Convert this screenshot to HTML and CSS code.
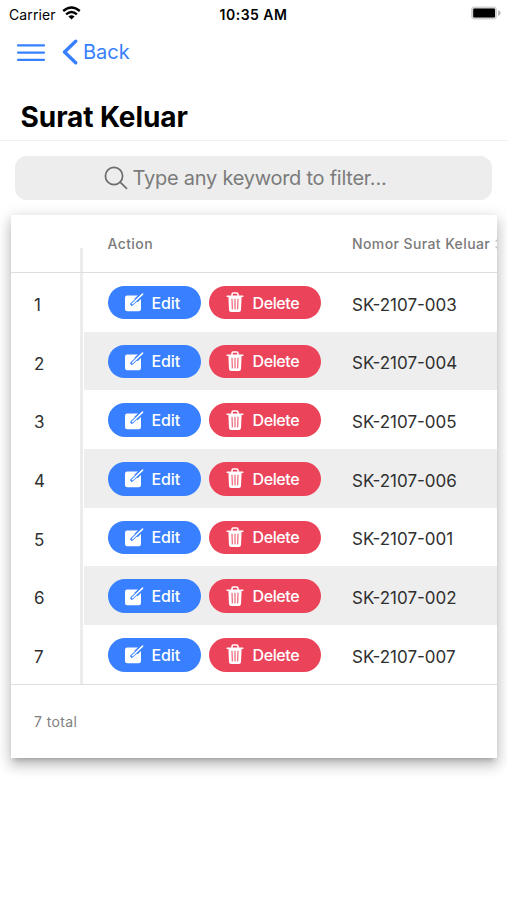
FILE: index.html
```html
<!DOCTYPE html>
<html lang="id">
<head>
<meta charset="utf-8">
<title>Surat Keluar</title>
<link rel="stylesheet" href="styles.css">
</head>
<body>
<svg width="0" height="0" class="defs">
  <symbol id="edit" viewBox="0 0 20 19">
    <rect x="1" y="2.6" width="16" height="15.6" rx="2.2" fill="#fff"/>
    <path d="M12 7.5 18.5 1.2" stroke="#3880ff" stroke-width="4.6"/>
    <path d="M7.9 11.2 18.6 1.2" stroke="#3880ff" stroke-width="3.2" stroke-linecap="round"/>
    <path d="M8.4 10.7 18.6 1.1" stroke="#fff" stroke-width="1.5" stroke-linecap="round"/>
  </symbol>
  <symbol id="trash" viewBox="0 0 18 21" fill="none" stroke="#fff">
    <path d="M1.2 4.2H16.8" stroke-width="1.6" stroke-linecap="round"/>
    <path d="M6 4V2.3Q6 1 7.3 1H10.7Q12 1 12 2.3V4" stroke-width="1.5"/>
    <path d="M2.4 4.5H15.6L15 17.9Q14.8 20 12.9 20H5.1Q3.2 20 3 17.9Z" fill="#fff" stroke="none"/>
    <path d="M6 7.2 6.3 17M9 7.2V17M12 7.2 11.7 17" stroke="#eb445a" stroke-width="1" stroke-linecap="round"/>
  </symbol>
</svg>
<div class="status">
  <div class="left"><span class="carrier">Carrier</span>
  <svg class="wifi" width="19" height="14" viewBox="0 0 19 14" fill="none" stroke="#000" stroke-width="2.4"><path d="M1.2 5Q9.5-2 17.8 5"/><path d="M4.1 8.3Q9.5 3.7 14.9 8.3"/><path d="M9.5 13.4 6.4 10.5Q9.5 8.1 12.6 10.5Z" fill="#000" stroke="none"/></svg></div>
  <span class="clock">10:35 AM</span>
  <svg class="battery" width="32" height="16" viewBox="0 0 32 16"><rect x="1" y="1.4" width="26" height="13.2" rx="3.6" fill="#d2d2d2"/><rect x="3.2" y="3.5" width="21.8" height="9" rx="1.2" fill="#000"/><path d="M28 5Q30.8 6 30.8 8T28 11Z" fill="#bbb"/></svg>
</div>
<header class="toolbar">
  <svg width="30" height="20" viewBox="0 0 30 20" stroke="#3880ff" stroke-width="2.3" stroke-linecap="round"><path d="M2 3.4H28M2 10.6H28M2 17.8H28"/></svg>
  <svg class="chevron" width="16" height="26" viewBox="0 0 16 26" fill="none" stroke="#3880ff" stroke-width="3.4" stroke-linecap="round" stroke-linejoin="round"><path d="M13.7 2.2 2.5 13 13.7 23.8"/></svg>
  <span class="back">Back</span>
</header>
<div class="title"><h1>Surat Keluar</h1></div>
<div class="search">
  <svg width="24" height="24" viewBox="0 0 24 24" fill="none" stroke="#6c6c6c" stroke-width="1.7" stroke-linecap="round"><circle cx="10" cy="10" r="8.6"/><path d="M16.4 16.4 22.5 22.3"/></svg>
  <span>Type any keyword to filter...</span>
</div>
<main class="card">
  <div class="row head"><div class="num"></div><div class="action">Action</div><div class="code">Nomor Surat Keluar<svg class="sort" width="10" height="14" viewBox="0 0 10 14" fill="none" stroke="#c4c4c4" stroke-width="1.4"><path d="M.6 4.6 3.6 1.6 6.6 4.6M.6 9.4 3.6 12.4 6.6 9.4"/></svg></div></div>
  <div class="body">
    <div class="row"><div class="num">1</div><div class="action"><span class="btn edit"><svg><use href="#edit"/></svg><b>Edit</b></span><span class="btn delete"><svg><use href="#trash"/></svg><b>Delete</b></span></div><div class="code">SK-2107-003</div></div>
    <div class="row"><div class="num">2</div><div class="action"><span class="btn edit"><svg><use href="#edit"/></svg><b>Edit</b></span><span class="btn delete"><svg><use href="#trash"/></svg><b>Delete</b></span></div><div class="code">SK-2107-004</div></div>
    <div class="row"><div class="num">3</div><div class="action"><span class="btn edit"><svg><use href="#edit"/></svg><b>Edit</b></span><span class="btn delete"><svg><use href="#trash"/></svg><b>Delete</b></span></div><div class="code">SK-2107-005</div></div>
    <div class="row"><div class="num">4</div><div class="action"><span class="btn edit"><svg><use href="#edit"/></svg><b>Edit</b></span><span class="btn delete"><svg><use href="#trash"/></svg><b>Delete</b></span></div><div class="code">SK-2107-006</div></div>
    <div class="row"><div class="num">5</div><div class="action"><span class="btn edit"><svg><use href="#edit"/></svg><b>Edit</b></span><span class="btn delete"><svg><use href="#trash"/></svg><b>Delete</b></span></div><div class="code">SK-2107-001</div></div>
    <div class="row"><div class="num">6</div><div class="action"><span class="btn edit"><svg><use href="#edit"/></svg><b>Edit</b></span><span class="btn delete"><svg><use href="#trash"/></svg><b>Delete</b></span></div><div class="code">SK-2107-002</div></div>
    <div class="row"><div class="num">7</div><div class="action"><span class="btn edit"><svg><use href="#edit"/></svg><b>Edit</b></span><span class="btn delete"><svg><use href="#trash"/></svg><b>Delete</b></span></div><div class="code">SK-2107-007</div></div>
  </div>
  <footer>7 total</footer>
</main>
</body>
</html>
```
FILE: styles.css
```css
* { box-sizing: border-box; }
body { margin: 0; height: 900px; overflow: hidden; background: #fff; font-family: Inter, "Liberation Sans", sans-serif; color: #000; }
svg { display: block; flex: none; }
.defs { position: absolute; }
.status { display: grid; grid-template-columns: 1fr auto 1fr; height: 28px; padding: 0 5px; align-items: center; font-size: 14px; white-space: nowrap; }
.left { display: flex; align-items: center; padding-left: 4px; }
.wifi { margin-left: 6px; margin-top: -2px; }
.carrier { letter-spacing: .1px; }
.clock { font-weight: 600; font-size: 14px; letter-spacing: .5px; }
.battery { justify-self: end; margin-top: -2px; }
.toolbar { display: flex; align-items: center; height: 48px; padding-left: 16px; color: #3880ff; font-size: 20px; }
.chevron { margin: 0 5px 0 16px; }
.title { height: 65px; border-bottom: 1px solid #f0f0f0; padding: 25px 0 0 20.6px; }
h1 { margin: 0; font-size: 28px; line-height: 32px; font-weight: 700; letter-spacing: -.1px; }
.search { display: flex; align-items: center; justify-content: center; height: 44px; margin: 15px 15px 0; padding-right: 17px; border-radius: 12px; background: #ededed; color: #7b7b7b; font-size: 20px; letter-spacing: -.25px; white-space: nowrap; gap: 5px; }
.card { width: 486px; height: 543px; margin: 15px 0 0 11px; background: #fff; box-shadow: 0 5px 5px -3px rgba(0,0,0,.2), 0 8px 12px 1px rgba(0,0,0,.14), 0 3px 14px 2px rgba(0,0,0,.12); }
.row { display: grid; grid-template-columns: 73px 268px 145px; height: 58.7px; align-items: stretch; }
.head { height: 58px; border-bottom: 1px solid #dedede; color: #7a7a7a; font-size: 14px; font-weight: 500; letter-spacing: .4px; overflow: hidden; }
.num { display: flex; align-items: center; padding: 5px 0 0 23px; background: linear-gradient(#ececec, #ececec) 69px 0 / 3px 100% no-repeat; font-size: 17px; color: #303030; }
.head .num { height: 24px; align-self: end; }
.action { display: flex; align-items: center; gap: 7.5px; padding-left: 23.5px; }
.body .action { padding-top: .6px; }
.code { display: flex; align-items: center; overflow: hidden; white-space: nowrap; }
.body .code { font-size: 17px; color: #303030; padding-top: 4.5px; }
.body .row:nth-child(even) .action, .body .row:nth-child(even) .code { background: #eee; }
.sort { margin-left: 5px; }
.btn { display: flex; align-items: center; height: 33.6px; border-radius: 17px; color: #fff; font-size: 16px; }
.btn b { font-weight: 500; }
.edit { width: 93.5px; background: #3880ff; padding-left: 16px; letter-spacing: -.1px; }
.edit svg { width: 20px; height: 19px; margin-right: 8px; }
.delete { width: 112.5px; background: #eb445a; padding-left: 17px; letter-spacing: -.4px; }
.delete svg { width: 18px; height: 21px; margin-right: 9px; }
footer { height: 74px; border-top: 1px solid #dedede; padding: 0 0 0 23px; display: flex; align-items: center; font-size: 14px; letter-spacing: .4px; color: #808080; }
```
